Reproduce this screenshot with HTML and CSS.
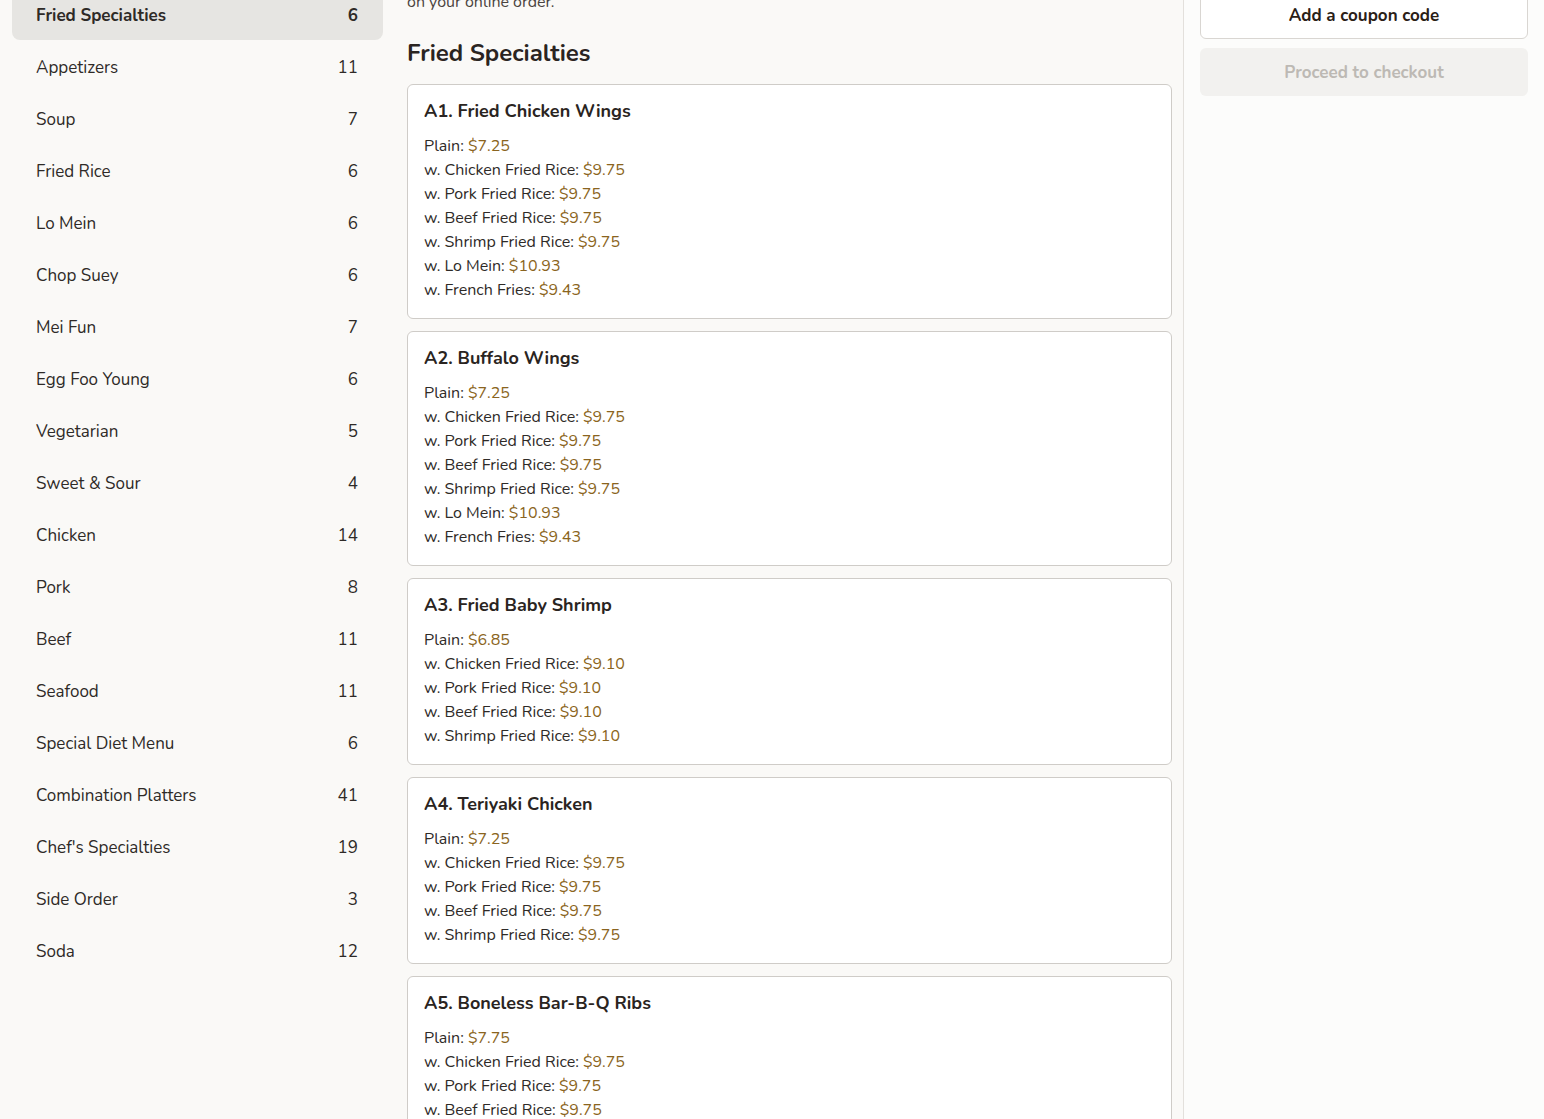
FILE: index.html
```html
<!DOCTYPE html>
<html lang="en">
<head>
<meta charset="utf-8">
<title>Menu</title>
<link rel="stylesheet" href="styles.css">
</head>
<body>
<div class="page">
  <nav class="sidebar">
    <a class="cat active"><span>Fried Specialties</span><span>6</span></a>
    <a class="cat"><span>Appetizers</span><span>11</span></a>
    <a class="cat"><span>Soup</span><span>7</span></a>
    <a class="cat"><span>Fried Rice</span><span>6</span></a>
    <a class="cat"><span>Lo Mein</span><span>6</span></a>
    <a class="cat"><span>Chop Suey</span><span>6</span></a>
    <a class="cat"><span>Mei Fun</span><span>7</span></a>
    <a class="cat"><span>Egg Foo Young</span><span>6</span></a>
    <a class="cat"><span>Vegetarian</span><span>5</span></a>
    <a class="cat"><span>Sweet &amp; Sour</span><span>4</span></a>
    <a class="cat"><span>Chicken</span><span>14</span></a>
    <a class="cat"><span>Pork</span><span>8</span></a>
    <a class="cat"><span>Beef</span><span>11</span></a>
    <a class="cat"><span>Seafood</span><span>11</span></a>
    <a class="cat"><span>Special Diet Menu</span><span>6</span></a>
    <a class="cat"><span>Combination Platters</span><span>41</span></a>
    <a class="cat"><span>Chef's Specialties</span><span>19</span></a>
    <a class="cat"><span>Side Order</span><span>3</span></a>
    <a class="cat"><span>Soda</span><span>12</span></a>
  </nav>

  <main class="main">
    <p class="intro">on your online order.</p>
    <h2 class="section-title">Fried Specialties</h2>

    <div class="card">
      <h3 class="item-title">A1. Fried Chicken Wings</h3>
      <ul class="options">
        <li>Plain: <span class="price">$7.25</span></li>
        <li>w. Chicken Fried Rice: <span class="price">$9.75</span></li>
        <li>w. Pork Fried Rice: <span class="price">$9.75</span></li>
        <li>w. Beef Fried Rice: <span class="price">$9.75</span></li>
        <li>w. Shrimp Fried Rice: <span class="price">$9.75</span></li>
        <li>w. Lo Mein: <span class="price">$10.93</span></li>
        <li>w. French Fries: <span class="price">$9.43</span></li>
      </ul>
    </div>

    <div class="card">
      <h3 class="item-title">A2. Buffalo Wings</h3>
      <ul class="options">
        <li>Plain: <span class="price">$7.25</span></li>
        <li>w. Chicken Fried Rice: <span class="price">$9.75</span></li>
        <li>w. Pork Fried Rice: <span class="price">$9.75</span></li>
        <li>w. Beef Fried Rice: <span class="price">$9.75</span></li>
        <li>w. Shrimp Fried Rice: <span class="price">$9.75</span></li>
        <li>w. Lo Mein: <span class="price">$10.93</span></li>
        <li>w. French Fries: <span class="price">$9.43</span></li>
      </ul>
    </div>

    <div class="card">
      <h3 class="item-title">A3. Fried Baby Shrimp</h3>
      <ul class="options">
        <li>Plain: <span class="price">$6.85</span></li>
        <li>w. Chicken Fried Rice: <span class="price">$9.10</span></li>
        <li>w. Pork Fried Rice: <span class="price">$9.10</span></li>
        <li>w. Beef Fried Rice: <span class="price">$9.10</span></li>
        <li>w. Shrimp Fried Rice: <span class="price">$9.10</span></li>
      </ul>
    </div>

    <div class="card">
      <h3 class="item-title">A4. Teriyaki Chicken</h3>
      <ul class="options">
        <li>Plain: <span class="price">$7.25</span></li>
        <li>w. Chicken Fried Rice: <span class="price">$9.75</span></li>
        <li>w. Pork Fried Rice: <span class="price">$9.75</span></li>
        <li>w. Beef Fried Rice: <span class="price">$9.75</span></li>
        <li>w. Shrimp Fried Rice: <span class="price">$9.75</span></li>
      </ul>
    </div>

    <div class="card">
      <h3 class="item-title">A5. Boneless Bar-B-Q Ribs</h3>
      <ul class="options">
        <li>Plain: <span class="price">$7.75</span></li>
        <li>w. Chicken Fried Rice: <span class="price">$9.75</span></li>
        <li>w. Pork Fried Rice: <span class="price">$9.75</span></li>
        <li>w. Beef Fried Rice: <span class="price">$9.75</span></li>
      </ul>
    </div>
  </main>

  <aside class="aside">
    <button class="btn coupon">Add a coupon code</button>
    <button class="btn checkout" disabled>Proceed to checkout</button>
  </aside>
</div>
</body>
</html>
```

FILE: styles.css
```css
* { box-sizing: border-box; }

html, body {
  margin: 0;
  padding: 0;
  background: #faf9f7;
  height: 100%;
  overflow: hidden;
}

body {
  font-family: "Nunito", "Lato", "Noto Sans", sans-serif;
  color: #2a2421;
}

.page {
  display: flex;
  align-items: stretch;
  margin-top: -10px;
  min-height: 1200px;
}

.sidebar {
  width: 395px;
  flex: none;
  padding: 0 12px;
  display: flex;
  flex-direction: column;
  gap: 2px;
}

.cat {
  display: flex;
  justify-content: space-between;
  align-items: center;
  height: 50px;
  padding: 0 25px 0 24px;
  border-radius: 8px;
  font-size: 17px;
  color: #2e2a27;
}

.cat.active {
  background: #e6e5e2;
  font-weight: 700;
}

.main {
  width: 777px;
  flex: none;
  margin-left: 12px;
  padding: 0 11px 0 0;
  border-right: 1px solid #e3e0dc;
}

.intro {
  margin: 0;
  font-size: 16px;
  line-height: 24px;
  color: #4a4440;
}

.section-title {
  margin: 23px 0 15px;
  font-size: 24px;
  line-height: 32px;
  font-weight: 700;
  color: #2a2421;
}

.card {
  background: #fff;
  border: 1px solid #cfccc8;
  border-radius: 6px;
  padding: 13px 16px 16px;
  margin-bottom: 12px;
}

.item-title {
  margin: 0 0 10px;
  font-size: 18px;
  line-height: 26px;
  font-weight: 700;
  color: #2a2421;
}

.options {
  list-style: none;
  margin: 0;
  padding: 0;
  font-size: 16px;
  line-height: 24px;
  color: #2e2a27;
}

.price {
  color: #8a6420;
}

.aside {
  width: 360px;
  flex: none;
  padding: 1px 16px 0;
  display: flex;
  flex-direction: column;
  gap: 9px;
  background: #fcfcfb;
}

.btn {
  height: 48px;
  width: 100%;
  border-radius: 6px;
  font-family: inherit;
  font-size: 17px;
  font-weight: 700;
}

.coupon {
  background: #fff;
  border: 1px solid #d9d6d2;
  color: #2a2016;
}

.checkout {
  background: #f2f1ef;
  border: none;
  color: #bdb9b4;
}
```
